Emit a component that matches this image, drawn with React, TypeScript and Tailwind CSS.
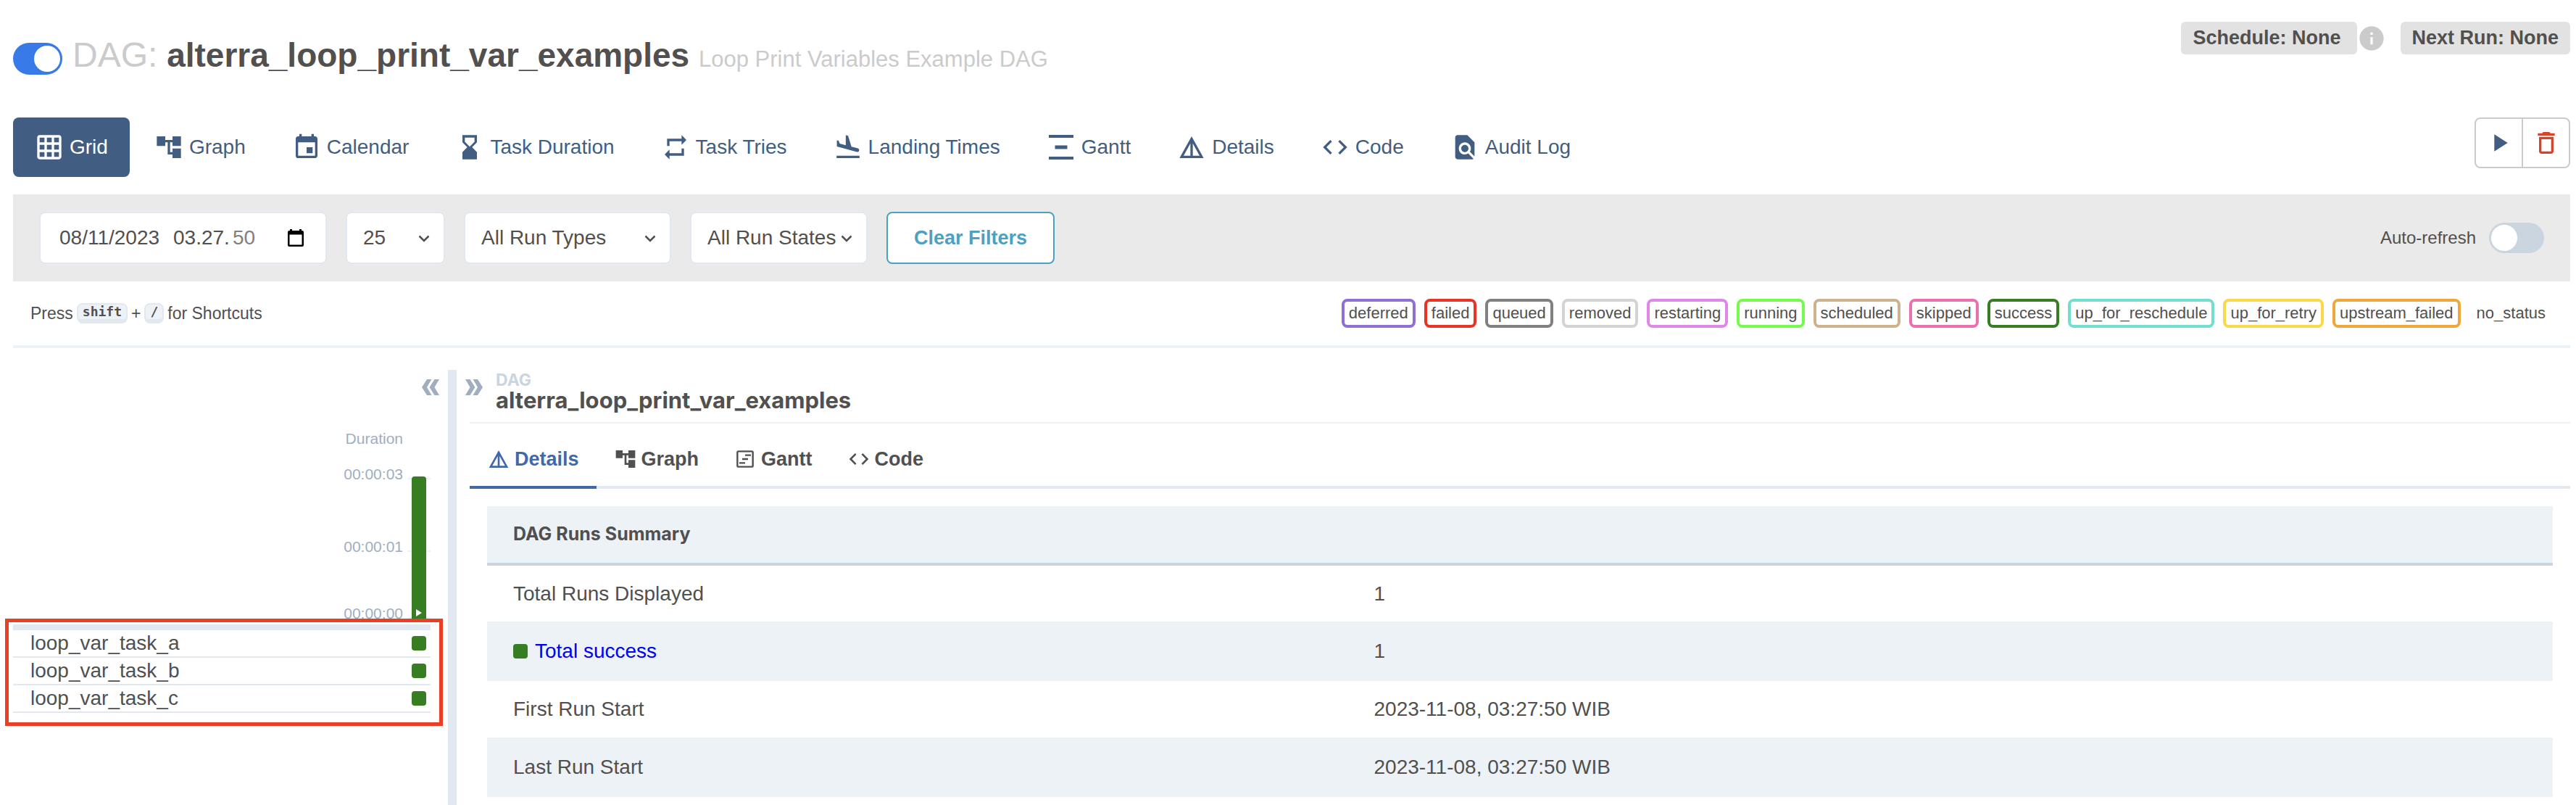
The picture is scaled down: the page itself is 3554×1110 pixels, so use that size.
import type { ReactNode } from "react";
import {
  MdGridOn,
  MdAccountTree,
  MdEvent,
  MdRepeat,
  MdFlightLand,
  MdDetails,
  MdCode,
  MdFindInPage,
  MdInfo,
  MdPlayArrow,
  MdDeleteOutline,
} from "react-icons/md";

function GanttIcon() {
  return (
    <svg viewBox="0 0 40 40" className="size-10" fill="currentColor" aria-hidden="true">
      <path d="M3 3h34v4H3zM11.500 17.500h17v5h-17zM3 33h34v4H3z" />
    </svg>
  );
}

function GanttOutlineIcon() {
  return (
    <svg viewBox="0 0 24 24" className="size-8" fill="none" stroke="currentColor" strokeWidth="1.800" aria-hidden="true">
      <rect x="4" y="4" width="16" height="16" rx="1" />
      <path d="M12 8h6M9 12h6M6 16h6" />
    </svg>
  );
}

function HourglassIcon() {
  return (
    <svg viewBox="0 0 24 24" className="size-10" fill="currentColor" aria-hidden="true">
      <path d="M18 22l-.01-6L14 12l3.990-4.010L18 2H6v6l4 4-4 3.990V22h12zM8 7.500V4h8v3.500l-4 4-4-4z" />
    </svg>
  );
}

function Guillemets({ flip = false }: { flip?: boolean }) {
  return (
    <svg
      viewBox="0 0 24 22"
      className={flip ? "h-[22px] w-6 rotate-180" : "h-[22px] w-6"}
      fill="currentColor"
      aria-hidden="true"
    >
      <path d="M7 0h6.500L7 11l6.500 11H7L0 11zM17.500 0H24l-6.500 11L24 22h-6.500l-7-11z" />
    </svg>
  );
}

function CalendarGlyph() {
  return (
    <svg viewBox="0 0 22 24" className="h-6 w-[22px]" fill="#000" aria-hidden="true">
      <path
        fillRule="evenodd"
        d="M3 0h3v2h10V0h3v2h1a2 2 0 0 1 2 2v18a2 2 0 0 1-2 2H2a2 2 0 0 1-2-2V4a2 2 0 0 1 2-2h1zM2.500 7.500v14h17v-14z"
      />
    </svg>
  );
}

const views: { label: string; icon: ReactNode }[] = [
  { label: "Grid", icon: <MdGridOn size={40} /> },
  { label: "Graph", icon: <MdAccountTree size={40} /> },
  { label: "Calendar", icon: <MdEvent size={40} /> },
  { label: "Task Duration", icon: <HourglassIcon /> },
  { label: "Task Tries", icon: <MdRepeat size={40} /> },
  { label: "Landing Times", icon: <MdFlightLand size={40} /> },
  { label: "Gantt", icon: <GanttIcon /> },
  { label: "Details", icon: <MdDetails size={40} /> },
  { label: "Code", icon: <MdCode size={40} /> },
  { label: "Audit Log", icon: <MdFindInPage size={40} /> },
];

const states = [
  { name: "deferred", border: "border-[#8d70d6]" },
  { name: "failed", border: "border-[#ea3323]" },
  { name: "queued", border: "border-[#808080]" },
  { name: "removed", border: "border-[#d3d3d3]" },
  { name: "restarting", border: "border-[#df87e8]" },
  { name: "running", border: "border-[#75fb4c]" },
  { name: "scheduled", border: "border-[#ccb38e]" },
  { name: "skipped", border: "border-[#ec6fb0]" },
  { name: "success", border: "border-[#377e22]" },
  { name: "up_for_reschedule", border: "border-[#72decf]" },
  { name: "up_for_retry", border: "border-[#f9d84a]" },
  { name: "upstream_failed", border: "border-[#f0a73a]" },
  { name: "no_status", border: "border-transparent" },
];

const panelTabs: { label: string; icon: ReactNode }[] = [
  { label: "Details", icon: <MdDetails size={32} /> },
  { label: "Graph", icon: <MdAccountTree size={32} /> },
  { label: "Gantt", icon: <GanttOutlineIcon /> },
  { label: "Code", icon: <MdCode size={32} /> },
];

const tasks = ["loop_var_task_a", "loop_var_task_b", "loop_var_task_c"];

function FilterSelect({ label, value, width }: { label: string; value: string; width: string }) {
  return (
    <div className={`relative ${width}`}>
      <select
        aria-label={label}
        className="h-[72px] w-full appearance-none rounded-lg border-2 border-[#e2e8f0] bg-white pl-[22px] text-[28px] text-[#51504f]"
      >
        <option>{value}</option>
      </select>
      <svg
        viewBox="0 0 16 10"
        className="pointer-events-none absolute top-[32px] right-[21px] h-[10px] w-4"
        fill="none"
        stroke="#51504f"
        strokeWidth="2.500"
        aria-hidden="true"
      >
        <path d="M1.500 1.500L8 8l6.500-6.500" />
      </svg>
    </div>
  );
}

function Header() {
  return (
    <header className="flex items-start justify-between pt-[26px]">
      <div className="flex items-center gap-3.5 pt-[20px]">
        <label className="relative mt-1 flex h-11 w-[68px] cursor-pointer">
          <input type="checkbox" role="switch" aria-label="Pause or unpause DAG" defaultChecked className="peer sr-only" />
          <span className="flex h-11 w-full items-center justify-end rounded-full bg-[#377ae8] px-[3px]">
            <span className="size-9 rounded-full bg-white" />
          </span>
        </label>
        <h1 className="text-[46px] leading-[60px] font-bold whitespace-nowrap text-[#51504f]">
          <span className="text-[48px] font-normal text-[#cbcbcb]">DAG:</span> alterra_loop_print_var_examples{" "}
          <span className="text-[31px] font-normal text-[#cbcbcb]">Loop Print Variables Example DAG</span>
        </h1>
      </div>
      <div className="flex items-center pt-1 text-[27px] leading-[45px] font-bold text-[#51504f]">
        <a href="#schedule" className="rounded-md bg-[#e2e2e2] pr-[22px] pl-4">Schedule: None</a>
        <MdInfo size={40} className="text-[#cbcbcb]" aria-label="Schedule information" />
        <span className="ml-5 rounded-md bg-[#e2e2e2] px-4">Next Run: None</span>
      </div>
    </header>
  );
}

function ViewNav() {
  return (
    <div className="mt-[50px] flex items-start justify-between">
      <nav className="flex gap-1">
        {views.map((v, i) => (
          <a
            key={v.label}
            href="#view"
            className={
              i === 0
                ? "flex h-[82px] items-center gap-2 rounded-lg bg-[#415e82] px-[30px] text-[28px] text-white"
                : "flex h-[82px] items-center gap-2 rounded-lg px-[30px] text-[28px] text-[#415e82]"
            }
          >
            {v.icon}
            {v.label}
          </a>
        ))}
      </nav>
      <div className="flex h-[70px] w-[132px] divide-x-2 divide-[#cbcbcb] rounded-lg border-2 border-[#cbcbcb]">
        <button aria-label="Trigger DAG" className="flex flex-1 items-center justify-center text-[#415e82]">
          <MdPlayArrow size={40} />
        </button>
        <button aria-label="Delete DAG" className="flex flex-1 items-center justify-center text-[#d4452b]">
          <MdDeleteOutline size={40} />
        </button>
      </div>
    </div>
  );
}

function FilterBar() {
  return (
    <div className="mt-6 flex h-[120px] items-center justify-between bg-[#eaeaea] px-9">
      <div className="flex items-center gap-[26px]">
        <div className="flex h-[72px] w-[397px] items-center rounded-lg border-2 border-[#e2e8f0] bg-white pr-[30px] pl-[26px] text-[28px] text-[#51504f]">
          <input aria-label="Base date" defaultValue="08/11/2023" className="w-[157px]" />
          <input aria-label="Base time" defaultValue="03.27." className="w-[82px]" />
          <input aria-label="Base time seconds" defaultValue="50" className="w-10 text-[#808080]" />
          <button aria-label="Open calendar" className="ml-auto">
            <CalendarGlyph />
          </button>
        </div>
        <FilterSelect label="Number of runs" value="25" width="w-[137px]" />
        <FilterSelect label="Run types" value="All Run Types" width="w-[286px]" />
        <FilterSelect label="Run states" value="All Run States" width="w-[245px]" />
        <button className="h-[72px] rounded-lg border-2 border-[#4ba1c1] bg-white px-9 text-[27px] font-bold text-[#4ba1c1]">
          Clear Filters
        </button>
      </div>
      <label className="flex items-center gap-[18px] text-[24px] text-[#51504f]">
        Auto-refresh
        <input type="checkbox" role="switch" className="peer sr-only" />
        <span className="flex h-[42px] w-[76px] items-center rounded-full bg-[#cbd5e0] px-[3px]">
          <span className="size-9 rounded-full bg-white" />
        </span>
      </label>
    </div>
  );
}

function Key({ children }: { children: ReactNode }) {
  return (
    <kbd className="rounded-lg border-2 border-b-[6px] border-[#e2e8f0] bg-[#edf2f7] px-1.5 font-['DejaVu_Sans_Mono',monospace] text-[18px] leading-5 font-bold">
      {children}
    </kbd>
  );
}

function Legend() {
  return (
    <div className="flex items-center justify-between border-b-4 border-[#edf2f7] px-6 py-6 text-[22px] leading-8 text-[#51504f]">
      <p className="flex items-center gap-[5px] text-[23px]">
        Press
        <Key>shift</Key>
        +
        <Key>/</Key>
        for Shortcuts
      </p>
      <ul className="flex gap-3">
        {states.map((s) => (
          <li key={s.name} className={`rounded-lg border-4 px-1.5 ${s.border}`}>
            {s.name}
          </li>
        ))}
      </ul>
    </div>
  );
}

function GridPanel() {
  return (
    <section className="flex w-[600px] flex-col">
      <button aria-label="Hide details panel" className="mt-[13px] mr-3 self-end text-[#a0aec0]">
        <Guillemets />
      </button>
      <div className="relative mt-[46px] mr-6 flex h-[270px] justify-end text-[21px] leading-7 text-[#a0aec0]">
        <div className="flex w-24 flex-col items-end pr-1.5">
          <span>Duration</span>
          <span className="mt-[21px]">00:00:03</span>
          <span className="mt-[72px]">00:00:01</span>
          <span className="mt-[64px]">00:00:00</span>
        </div>
        <div className="flex w-8 flex-col">
          <div className="mt-[68px] h-[2px] bg-[#edf2f7]" />
          <div className="mt-[98px] h-[2px] bg-[#edf2f7]" />
          <div className="mt-[90px] h-[2px] bg-[#edf2f7]" />
        </div>
        <button
          aria-label="Manual run, 3 seconds"
          className="absolute right-1.5 bottom-1 flex h-[200px] w-5 items-end justify-center rounded-t bg-[#377e22] pb-[7px] text-white"
        >
          <svg viewBox="0 0 8 10" className="h-[10px] w-2" fill="currentColor" aria-hidden="true">
            <path d="M0 0l8 5-8 5z" />
          </svg>
        </button>
      </div>
      <div className="relative mr-6">
        <table className="w-full text-[28px] text-[#51504f]">
          <tbody className="border-t-8 border-[#e2e8f0]">
            {tasks.map((t) => (
              <tr key={t} className="h-[38px] border-b-2 border-[#e2e8f0]">
                <td className="pl-6 leading-9">{t}</td>
                <td className="w-8">
                  <button aria-label={`${t} success`} className="mx-1.5 block size-5 rounded bg-[#377e22]" />
                </td>
              </tr>
            ))}
          </tbody>
        </table>
        <div className="pointer-events-none absolute -top-2 -right-[17px] -bottom-[18px] -left-[11px] border-[5px] border-[#ea3f25]" />
      </div>
    </section>
  );
}

function DetailsPanel() {
  const rows: { label: ReactNode; value: string }[] = [
    { label: "Total Runs Displayed", value: "1" },
    {
      label: (
        <a href="#success" className="flex items-center gap-2.5 text-[#0000f5]">
          <span className="size-5 rounded bg-[#377e22]" />
          Total success
        </a>
      ),
      value: "1",
    },
    { label: "First Run Start", value: "2023-11-08, 03:27:50 WIB" },
    { label: "Last Run Start", value: "2023-11-08, 03:27:50 WIB" },
  ];
  return (
    <section className="min-w-0 flex-1 text-[#51504f]">
      <div className="flex pl-3">
        <button aria-label="Show grid panel" className="mt-[13px] mr-[18px] self-start text-[#a0aec0]">
          <Guillemets flip />
        </button>
        <div className="font-['Inter',sans-serif] font-bold">
          <div className="text-[23px] leading-7 text-[#cbd5e0]">DAG</div>
          <h2 className="text-[31px] leading-7">alterra_loop_print_var_examples</h2>
        </div>
      </div>
      <div className="ml-[18px]">
        <div className="mt-4 border-t-2 border-[#edf2f7]" />
        <div role="tablist" className="flex h-[90px] border-b-4 border-[#e2e8f0] text-[27px] font-bold">
          {panelTabs.map((t, i) => (
            <button
              key={t.label}
              role="tab"
              aria-selected={i === 0}
              className={
                i === 0
                  ? "-mb-1 flex items-center gap-1.5 border-b-4 border-[#4069ad] px-6 pt-3 text-[#4069ad]"
                  : "-mb-1 flex items-center gap-1.5 border-b-4 border-transparent px-6 pt-3"
              }
            >
              {t.icon}
              {t.label}
            </button>
          ))}
        </div>
        <div className="px-6 pt-6">
          <table className="w-full table-fixed text-left text-[28px]">
            <thead>
              <tr className="h-20 border-b-4 border-[#cbd5e0] bg-[#edf2f7]">
                <th className="w-5/12 px-9 font-['Inter',sans-serif] text-[25px]">DAG Runs Summary</th>
                <th />
              </tr>
            </thead>
            <tbody>
              {rows.map((r, i) => (
                <tr key={i} className="h-20 border-b-2 border-[#edf2f7] even:bg-[#edf2f7]">
                  <td className="px-9">{r.label}</td>
                  <td className="px-9">{r.value}</td>
                </tr>
              ))}
            </tbody>
          </table>
        </div>
      </div>
    </section>
  );
}

export default function App() {
  return (
    <main className="flex min-h-screen flex-col bg-white pr-2 pl-[18px] font-['Liberation_Sans',Arial,sans-serif]">
      <Header />
      <ViewNav />
      <FilterBar />
      <Legend />
      <div className="mt-[30px] flex flex-1">
        <GridPanel />
        <div role="separator" className="w-3 bg-[#e2e8f0]" />
        <DetailsPanel />
      </div>
    </main>
  );
}
